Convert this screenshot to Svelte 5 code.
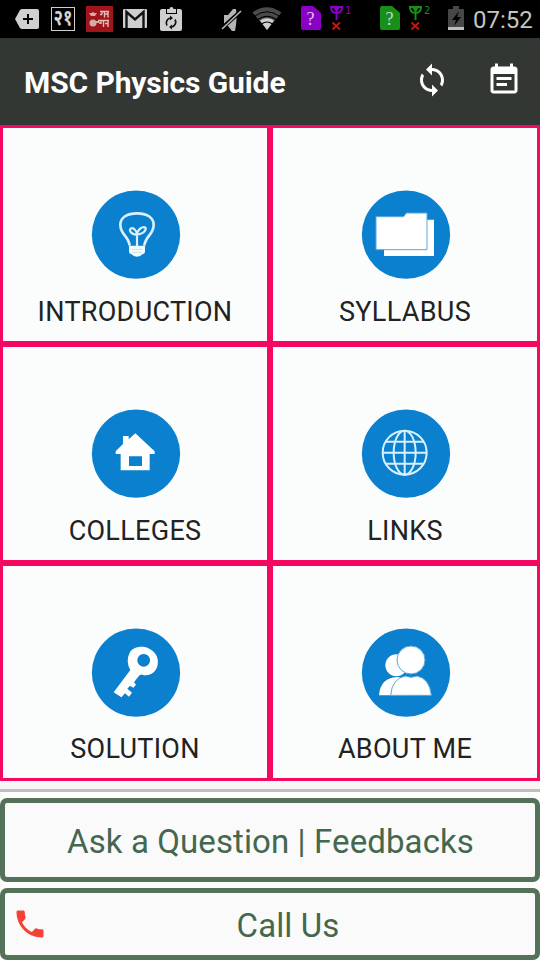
<script lang="ts">
  type Tile = { icon: string; title: string };

  const tiles: Tile[] = [
    { icon: "bulb", title: "INTRODUCTION" },
    { icon: "folder", title: "SYLLABUS" },
    { icon: "home", title: "COLLEGES" },
    { icon: "globe", title: "LINKS" },
    { icon: "key", title: "SOLUTION" },
    { icon: "people", title: "ABOUT ME" },
  ];

  const sims = [
    { slot: "1", color: "#8b00c9" },
    { slot: "2", color: "#169016" },
  ];
</script>

<div class="screen">
  <div class="status">
    <svg width="45" height="38" viewBox="0 0 45 38">
      <path fill="#cfcfcf" d="M22 9h15q2 0 2 2v16q0 2-2 2H22q-1 0-2-1l-5-9 5-9q1-1 2-1z" />
      <path stroke="#000" stroke-width="2" d="M23 19h10M28 14v10" />
    </svg>
    <svg width="36" height="38" viewBox="45 0 36 38">
      <rect x="51.5" y="7.5" width="23" height="23" fill="none" stroke="#cfcfcf" />
      <text x="63" y="25" class="date" text-anchor="middle" textLength="19" lengthAdjust="spacingAndGlyphs">२१</text>
    </svg>
    <svg width="37" height="38" viewBox="81 0 37 38">
      <rect x="86" y="6" width="27" height="26" fill="#a01519" />
      <g fill="#d8aaa6">
        <path d="M89 13h3l1-1.500 1 1.500h3l-2 3h-4z" />
        <circle cx="93" cy="23" r="3.500" />
        <path d="M96 21h3v2h-3z" />
      </g>
      <path fill="none" stroke="#e2bcb8" stroke-width="1.400" d="M100 11.500h9M102 11.500v3M102 14.500h-2M104.500 11.500v6M108 11.500v6M105 14h3M98 20.500h11M101 21v3M99 23h2M103.500 21v6M108 21v6M105 23.500h3" />
    </svg>
    <svg width="36" height="38" viewBox="118 0 36 38">
      <rect x="123" y="9" width="24" height="19" rx="1" fill="#cfcfcf" />
      <path fill="none" stroke="#111" stroke-width="2.400" d="M126.500 28V12l8.500 7.500 8.500-7.500v16" />
    </svg>
    <svg width="60" height="38" viewBox="154 0 60 38">
      <path fill="#cfcfcf" d="M162 9h4v5h11V9h3q2 0 2 2v18q0 2-2 2h-18q-2 0-2-2V11q0-2 2-2z" />
      <path fill="#cfcfcf" d="M167 9h2.500q0-2 2-2t2 2h2.500v4h-9z" />
      <path fill="none" stroke="#111" stroke-width="1.700" d="M167 25.500a5 5 0 0 1 3.500-7.500M175 19.500a5 5 0 0 1-3.500 7.500" />
      <path fill="#111" d="M170 15.500l3 2.500-3 2.500zM172 24.500l-3 2.500 3 2.500z" />
    </svg>
    <svg width="34" height="38" viewBox="214 0 34 38">
      <path fill="#b5b5b5" d="M224 15h4l5-6h3q1 5 .5 11t-1.500 11h-3l-4-5h-4z" />
      <path stroke="#000" stroke-width="4" d="M221 29l20-18" />
      <path stroke="#b5b5b5" stroke-width="1.700" d="M222 29l19-18" />
    </svg>
    <svg width="48" height="38" viewBox="248 0 48 38">
      <path fill="#4b4b4b" d="M252.500 12.500q14-10.500 29 0L267 30z" />
      <path fill="none" stroke="#000" d="M255 16q12-8.500 24 0" />
      <path fill="#cfcfcf" d="M260 20.500q7-4.500 14 0L267 30z" />
      <path fill="none" stroke="#000" stroke-width="1.200" d="M257 20q10-7.500 20 0M261.500 24q5.500-4 11 0" />
    </svg>
    {#each sims as sim}
      <svg class="sim" width="62" height="38" viewBox="0 0 62 38">
        <path fill={sim.color} d="M6 6h11l8 7v15q0 2-2 2H7q-2 0-2-2V8z" />
        <text x="14.500" y="25" class="question" text-anchor="middle">?</text>
        <path fill="none" stroke={sim.color} stroke-width="1.900" d="M34 7h13M35 7q0 6 5.500 6T46 7M38 7l2.500 4L43 7M40.500 7v13" />
        <path stroke="#c5160d" stroke-width="2" d="M36.500 22.500l7.500 7M44 22.500l-7.500 7" />
        <text x="49" y="14" class="slot" fill={sim.color}>{sim.slot}</text>
      </svg>
    {/each}
    <svg class="battery" width="27" height="38" viewBox="446 0 27 38">
      <path fill="#474747" d="M449 9h4V6h6v3h4q1 0 1 1v17h-16V10q0-1 1-1z" />
      <path fill="#bdbdbd" d="M448 27h16v3h-16z" />
      <path fill="#000" d="M459 11l-7 9h4l-2 6 7-9h-4z" />
    </svg>
    <span class="clock">07:52</span>
  </div>

  <header>
    <h1>MSC Physics Guide</h1>
    <svg class="sync" width="36" height="36" viewBox="0 0 24 24" fill="#fff">
      <path d="M12 4V1L8 5l4 4V6c3.310 0 6 2.690 6 6 0 1.010-.25 1.970-.7 2.800l1.460 1.460C19.540 15.030 20 13.570 20 12c0-4.420-3.580-8-8-8zm0 14c-3.310 0-6-2.690-6-6 0-1.010.25-1.970.7-2.800L5.240 7.740C4.460 8.970 4 10.430 4 12c0 4.420 3.580 8 8 8v3l4-4-4-4v3z" />
    </svg>
    <svg width="36" height="36" viewBox="0 0 24 24" fill="#fff">
      <path d="M17 10H7v2h10v-2zm2-7h-1V1h-2v2H8V1H6v2H5c-1.110 0-1.990.9-1.990 2L3 19c0 1.100.89 2 2 2h14c1.100 0 2-.9 2-2V5c0-1.100-.9-2-2-2zm0 16H5V8h14v11zm-5-5H7v2h7v-2z" />
    </svg>
  </header>

  <main>
    {#each tiles as tile}
      <div class="tile">
        <svg width="110" height="110" viewBox="0 0 330 330">
          <circle cx="168" cy="164" r="132.500" fill="#0b80ce" />
          {#if tile.icon === "bulb"}
            <g fill="none" stroke="#d9f1ff" stroke-width="8" stroke-linejoin="round">
              <path d="M149 197C146 168 121 164 121 134C121 112 142 100 171 100S221 112 221 134C221 164 196 168 193 197" />
              <path stroke-width="6.500" d="M171 198v-37M171 164C160 164 148 158 150 148C157 138 170 150 171 164C172 150 189 135 197 144C199 155 183 164 171 164" />
            </g>
            <path fill="#f3fbff" d="M147 197h48v18q0 6-8 8-5 7-16 7t-16-7q-8-2-8-8z" />
            <path stroke="#c8dfee" stroke-width="3" d="M155 208h32M157 217h28" />
          {:else if tile.icon === "folder"}
            <path fill="#fff" d="M102 119h150v109H102z" />
            <path fill="#fff" stroke="#5aa7dc" stroke-width="3" d="M78 110h83l8-11h62v110H78z" />
          {:else if tile.icon === "home"}
            <path fill="#fff" fill-rule="evenodd" d="M129 111h17v10l20-18 58 54v8h-15v49h-87v-49h-15v-8l22-22zM147 172v29h39v-29z" />
          {:else if tile.icon === "globe"}
            <g fill="none" stroke="#d9f1ff" stroke-width="6">
              <circle cx="164" cy="161" r="66" />
              <ellipse cx="164" cy="161" rx="33" ry="66" />
              <path d="M164 95v132M98 161h132M108 128h112M108 194h112" />
            </g>
          {:else if tile.icon === "key"}
            <path fill="#fff" fill-rule="evenodd" d="M149 104C159 87 187 81 208 92C229 103 238 122 232 145C226 166 207 176 187 170Q179 169 176 175L162 193l6 7-8 9-10-6-8 9 14 12-9 12-12-10-11 12-23-15 50-67q-15-26-2-52zM191 108a19 19 0 1 0 .1 0z" />
          {:else}
            <g fill="#fff">
              <circle cx="139" cy="142" r="33" />
              <path d="M87 232Q91 179 141 177q35 1 47 55z" />
            </g>
            <g fill="#fff" stroke="#5aa7dc" stroke-width="3">
              <circle cx="183" cy="126" r="42" />
              <path d="M122 232Q126 182 166 174q17 8 35 0Q239 182 244 232z" />
            </g>
          {/if}
        </svg>
        <span class="title">{tile.title}</span>
      </div>
    {/each}
  </main>

  <footer>
    <button class="ask"><span>Ask a Question | Feedbacks</span></button>
    <button class="call">
      <svg width="36" height="36" viewBox="0 0 24 24" fill="#f44336">
        <path d="M6.620 10.790c1.440 2.830 3.760 5.140 6.590 6.590l2.200-2.200c.27-.27.67-.36 1.020-.24 1.120.37 2.330.57 3.570.57.55 0 1 .45 1 1V20c0 .55-.45 1-1 1-9.390 0-17-7.610-17-17 0-.55.45-1 1-1h3.500c.55 0 1 .45 1 1 0 1.250.2 2.450.57 3.570.11.35.03.74-.25 1.020l-2.200 2.200z" />
      </svg>
      <span>Call Us</span>
    </button>
  </footer>
</div>

<style>
  :global(body) {
    margin: 0;
  }

  .screen {
    display: flex;
    flex-direction: column;
    width: 540px;
    height: 960px;
    overflow: hidden;
    background-color: #f9f7f5;
    font-family: Roboto, sans-serif;
  }

  svg {
    display: block;
    flex: none;
  }

  .status {
    display: flex;
    height: 38px;
    background-color: black;
    color: #c4c4c4;
  }

  .date {
    fill: #d4d4d4;
    font: bold 22px "Noto Sans", sans-serif;
  }

  .question {
    fill: #d5cfda;
    font: 18px "Liberation Serif", serif;
  }

  .slot {
    font: 10px "DejaVu Sans", sans-serif;
  }

  .sim {
    margin-right: 17px;
  }

  .battery {
    margin-left: -8px;
  }

  .clock {
    font-size: 24px;
    line-height: 40px;
  }

  header {
    display: flex;
    align-items: center;
    box-sizing: border-box;
    height: 87px;
    padding: 0 18px 4px 24px;
    background-color: #333734;
    color: white;
  }

  h1 {
    flex: 1;
    margin: 0;
    padding-top: 5px;
    font-size: 30px;
    font-weight: bold;
    letter-spacing: -0.1px;
    white-space: nowrap;
  }

  .sync {
    margin-right: 36px;
  }

  main {
    display: grid;
    grid-template-columns: 1fr 1fr;
    grid-template-rows: 219px 219px 218px;
  }

  .tile {
    display: flex;
    flex-direction: column;
    align-items: center;
    box-sizing: border-box;
    padding-top: 52px;
    border: 3px solid #f50862;
    background-color: #fafdfc;
  }

  .title {
    margin-top: 6px;
    color: #222;
    font-size: 27px;
    line-height: 32px;
    letter-spacing: 0.3px;
  }

  .tile:nth-child(n + 5) .title {
    margin-top: 5px;
  }

  footer {
    display: flex;
    flex-direction: column;
    gap: 6px;
    margin-top: 8px;
    padding-top: 6px;
    border-top: 3px solid #bfbfc1;
    background-color: #fdfdfc;
  }

  button {
    display: flex;
    align-items: center;
    box-sizing: border-box;
    width: 540px;
    margin: 0;
    padding: 0 11px;
    border: 5px solid #557159;
    border-radius: 7px;
    background-color: #fafafa;
    color: #43674f;
    font-family: inherit;
    font-size: 33px;
    letter-spacing: 0.1px;
  }

  button span {
    flex: 1;
    text-align: center;
  }

  .ask {
    height: 84px;
    padding: 2px 10px 0 11px;
  }

  .call {
    height: 72px;
    padding: 0 7px;
  }

  .call span {
    padding-top: 2px;
  }
</style>
